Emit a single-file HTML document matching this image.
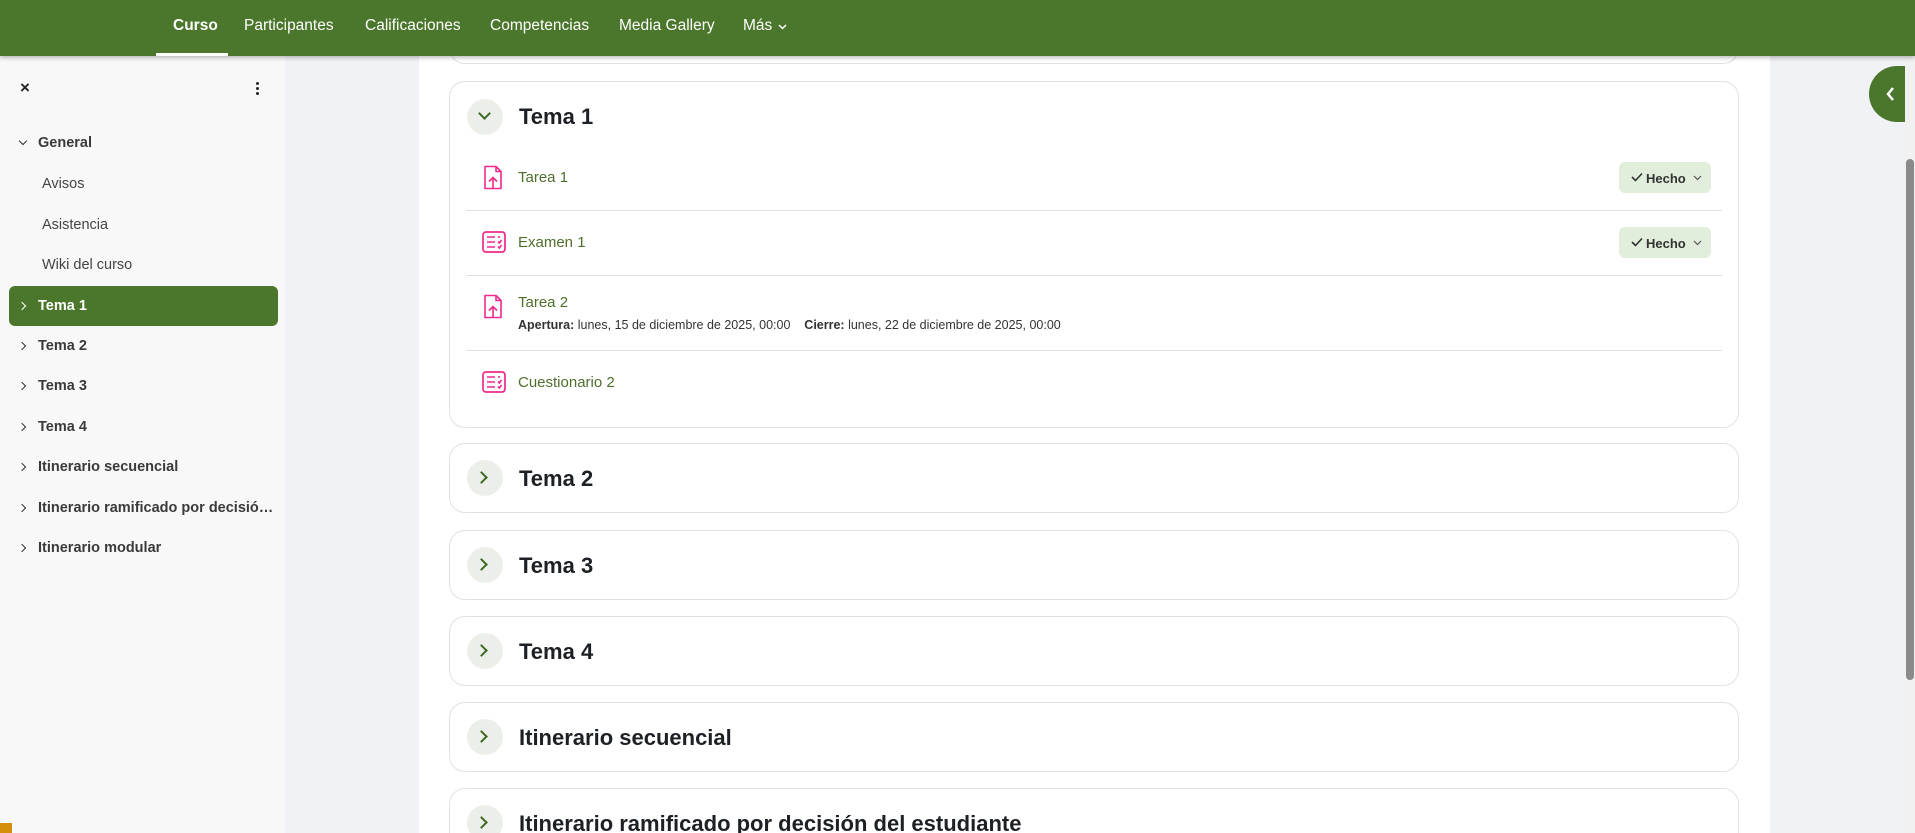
<!DOCTYPE html>
<html><head><meta charset="utf-8"><style>
*{box-sizing:border-box;margin:0;padding:0}
html,body{width:1915px;height:833px;overflow:hidden}
body{position:relative;font-family:"Liberation Sans",sans-serif;background:#fff}
.nav{position:absolute;left:0;top:0;width:1915px;height:56px;background:#4a772b;box-shadow:0 2px 4px rgba(0,0,0,.25);z-index:5}
.nav span{position:absolute;top:17px;color:#fff;font-size:15.5px}
.nav .u{position:absolute;left:156px;top:53px;width:72px;height:3px;background:#fff}
.side{position:absolute;left:0;top:56px;width:285px;height:777px;background:#f8f8f8}
.gray{position:absolute;top:56px;height:777px;background:#f1f2f6}
.si{position:absolute;font-size:14.5px;color:#3a3a3a;font-weight:bold}
.sub{position:absolute;font-size:14.5px;color:#444}
.chev{position:absolute;width:6px;height:6px;border-right:1.3px solid #333;border-bottom:1.3px solid #333}
.card{position:absolute;left:449px;width:1290px;border:1px solid #dee2e6;border-radius:16px;background:#fff}
.circ{position:absolute;left:17px;width:36px;height:36px;border-radius:50%;background:#ecefe9}
.circ i{position:absolute;width:9px;height:9px;border-right:2px solid #3d6a22;border-bottom:2px solid #3d6a22}
.ttl{position:absolute;left:69px;font-size:22px;font-weight:bold;color:#1d2125}
.it{position:absolute;left:518px;font-size:15px;color:#4f6e2c}
.sep{position:absolute;left:466px;width:1256px;height:1px;background:#dee2e6}
.hecho{position:absolute;left:1619px;width:92px;height:31px;border-radius:6px;background:#e1eedb;font-size:13px;font-weight:bold;color:#333;padding:9px 0 0 27px}
.ic{position:absolute}
</style></head><body>
<div class="nav">
<span style="left:173px;font-weight:bold">Curso</span>
<span style="left:244px">Participantes</span>
<span style="left:365px">Calificaciones</span>
<span style="left:490px">Competencias</span>
<span style="left:619px">Media Gallery</span>
<span style="left:743px">Más <svg width="9" height="7" viewBox="0 0 9 7" style="margin-left:1px"><path d="M1 2l3.5 3.5L8 2" stroke="#fff" stroke-width="1.5" fill="none"/></svg></span>
<div class="u"></div>
</div>
<div class="side">
<div style="position:absolute;left:20px;top:22px;font-size:17px;color:#222;font-weight:bold">×</div>
<div style="position:absolute;left:256px;top:26px;width:4px"><div style="width:3px;height:3px;background:#222;border-radius:50%;margin-bottom:2px"></div><div style="width:3px;height:3px;background:#222;border-radius:50%;margin-bottom:2px"></div><div style="width:3px;height:3px;background:#222;border-radius:50%"></div></div>
</div>
<div class="chev" style="left:20px;top:138px;transform:rotate(45deg)"></div>
<div class="si" style="left:38px;top:135px">General</div>
<div class="sub" style="left:42px;top:176px">Avisos</div>
<div class="sub" style="left:42px;top:217px">Asistencia</div>
<div class="sub" style="left:42px;top:257px">Wiki del curso</div>
<div style="position:absolute;left:9px;top:286px;width:269px;height:40px;background:#4a772b;border-radius:6px"></div>
<div class="chev" style="left:19px;top:303px;transform:rotate(-45deg);border-color:#fff"></div>
<div class="si" style="left:38px;top:298px;color:#fff">Tema 1</div>
<div class="chev" style="left:19px;top:343px;transform:rotate(-45deg)"></div><div class="si" style="left:38px;top:338px">Tema 2</div>
<div class="chev" style="left:19px;top:383px;transform:rotate(-45deg)"></div><div class="si" style="left:38px;top:378px">Tema 3</div>
<div class="chev" style="left:19px;top:424px;transform:rotate(-45deg)"></div><div class="si" style="left:38px;top:419px">Tema 4</div>
<div class="chev" style="left:19px;top:464px;transform:rotate(-45deg)"></div><div class="si" style="left:38px;top:459px">Itinerario secuencial</div>
<div class="chev" style="left:19px;top:505px;transform:rotate(-45deg)"></div><div class="si" style="left:38px;top:500px">Itinerario ramificado por decisió…</div>
<div class="chev" style="left:19px;top:545px;transform:rotate(-45deg)"></div><div class="si" style="left:38px;top:540px">Itinerario modular</div>
<div style="position:absolute;left:0;top:823px;width:12px;height:10px;background:#d4900a"></div>
<div class="gray" style="left:285px;width:134px"></div>
<div class="gray" style="left:1770px;width:135px"></div>
<div style="position:absolute;left:1904px;top:56px;width:11px;height:777px;background:#f1f1f1"></div>
<div style="position:absolute;left:1906px;top:159px;width:8px;height:521px;background:#8a8a8a;border-radius:4px"></div>
<div style="position:absolute;left:1869px;top:66px;width:36px;height:56px;background:#4a772b;border-radius:28px 0 0 28px;overflow:hidden"><svg style="position:absolute;left:16px;top:20px" width="10" height="16" viewBox="0 0 10 16"><path d="M8 2L3 8l5 6" stroke="#fff" stroke-width="2.5" fill="none"/></svg></div>

<div class="card" style="top:20px;height:44px"></div>
<div class="card" style="top:81px;height:347px">
<div class="circ" style="top:17px"><i style="left:13px;top:10px;transform:rotate(45deg)"></i></div>
<div class="ttl" style="top:22px">Tema 1</div>
</div>
<svg class="ic" style="left:483px;top:165px" width="20" height="26" viewBox="0 0 20 26"><path d="M2 1.5h11l5 5v17h-16z M13 1.5v5h5" stroke="#ee2a8c" stroke-width="1.6" fill="none" stroke-linejoin="round"/><path d="M10 24V13M6 16.5l4-4 4 4" stroke="#ee2a8c" stroke-width="1.6" fill="none"/></svg>
<div class="it" style="top:169px">Tarea 1</div>
<div class="hecho" style="top:162px">Hecho</div>
<svg class="ic" style="left:1631px;top:172px" width="12" height="10" viewBox="0 0 12 10"><path d="M1 5l3.5 3.5L11 1.5" stroke="#333" stroke-width="1.6" fill="none"/></svg>
<svg class="ic" style="left:1693px;top:175px" width="9" height="6" viewBox="0 0 9 6"><path d="M1 1l3.5 3.5L8 1" stroke="#555" stroke-width="1.2" fill="none"/></svg>
<div class="sep" style="top:210px"></div>
<svg class="ic" style="left:482px;top:231px" width="24" height="22" viewBox="0 0 24 22"><rect x="1" y="1" width="22" height="20" rx="3" stroke="#ee2a8c" stroke-width="1.7" fill="none"/><path d="M5 6h8M5 11h8M5 16h8M17 5v2M16 10.5l1.5 1.5 2-3M16 15.5l1.5 1.5 2-3" stroke="#ee2a8c" stroke-width="1.6" fill="none"/></svg>
<div class="it" style="top:234px">Examen 1</div>
<div class="hecho" style="top:227px">Hecho</div>
<svg class="ic" style="left:1631px;top:237px" width="12" height="10" viewBox="0 0 12 10"><path d="M1 5l3.5 3.5L11 1.5" stroke="#333" stroke-width="1.6" fill="none"/></svg>
<svg class="ic" style="left:1693px;top:240px" width="9" height="6" viewBox="0 0 9 6"><path d="M1 1l3.5 3.5L8 1" stroke="#555" stroke-width="1.2" fill="none"/></svg>
<div class="sep" style="top:275px"></div>
<svg class="ic" style="left:483px;top:294px" width="20" height="26" viewBox="0 0 20 26"><path d="M2 1.5h11l5 5v17h-16z M13 1.5v5h5" stroke="#ee2a8c" stroke-width="1.6" fill="none" stroke-linejoin="round"/><path d="M10 24V13M6 16.5l4-4 4 4" stroke="#ee2a8c" stroke-width="1.6" fill="none"/></svg>
<div class="it" style="top:294px">Tarea 2</div>
<div style="position:absolute;left:518px;top:318px;font-size:12.5px;color:#333"><b>Apertura:</b> lunes, 15 de diciembre de 2025, 00:00 &nbsp;&nbsp; <b>Cierre:</b> lunes, 22 de diciembre de 2025, 00:00</div>
<div class="sep" style="top:350px"></div>
<svg class="ic" style="left:482px;top:371px" width="24" height="22" viewBox="0 0 24 22"><rect x="1" y="1" width="22" height="20" rx="3" stroke="#ee2a8c" stroke-width="1.7" fill="none"/><path d="M5 6h8M5 11h8M5 16h8M17 5v2M16 10.5l1.5 1.5 2-3M16 15.5l1.5 1.5 2-3" stroke="#ee2a8c" stroke-width="1.6" fill="none"/></svg>
<div class="it" style="top:374px">Cuestionario 2</div>

<div class="card" style="top:443px;height:70px"><div class="circ" style="top:16px"><i style="left:10px;top:13px;transform:rotate(-45deg)"></i></div><div class="ttl" style="top:22px">Tema 2</div></div>
<div class="card" style="top:530px;height:70px"><div class="circ" style="top:16px"><i style="left:10px;top:13px;transform:rotate(-45deg)"></i></div><div class="ttl" style="top:22px">Tema 3</div></div>
<div class="card" style="top:616px;height:70px"><div class="circ" style="top:16px"><i style="left:10px;top:13px;transform:rotate(-45deg)"></i></div><div class="ttl" style="top:22px">Tema 4</div></div>
<div class="card" style="top:702px;height:70px"><div class="circ" style="top:16px"><i style="left:10px;top:13px;transform:rotate(-45deg)"></i></div><div class="ttl" style="top:22px">Itinerario secuencial</div></div>
<div class="card" style="top:788px;height:60px;border-bottom:none;border-radius:16px 16px 0 0"><div class="circ" style="top:16px"><i style="left:10px;top:13px;transform:rotate(-45deg)"></i></div><div class="ttl" style="top:22px">Itinerario ramificado por decisión del estudiante</div></div>
</body></html>
